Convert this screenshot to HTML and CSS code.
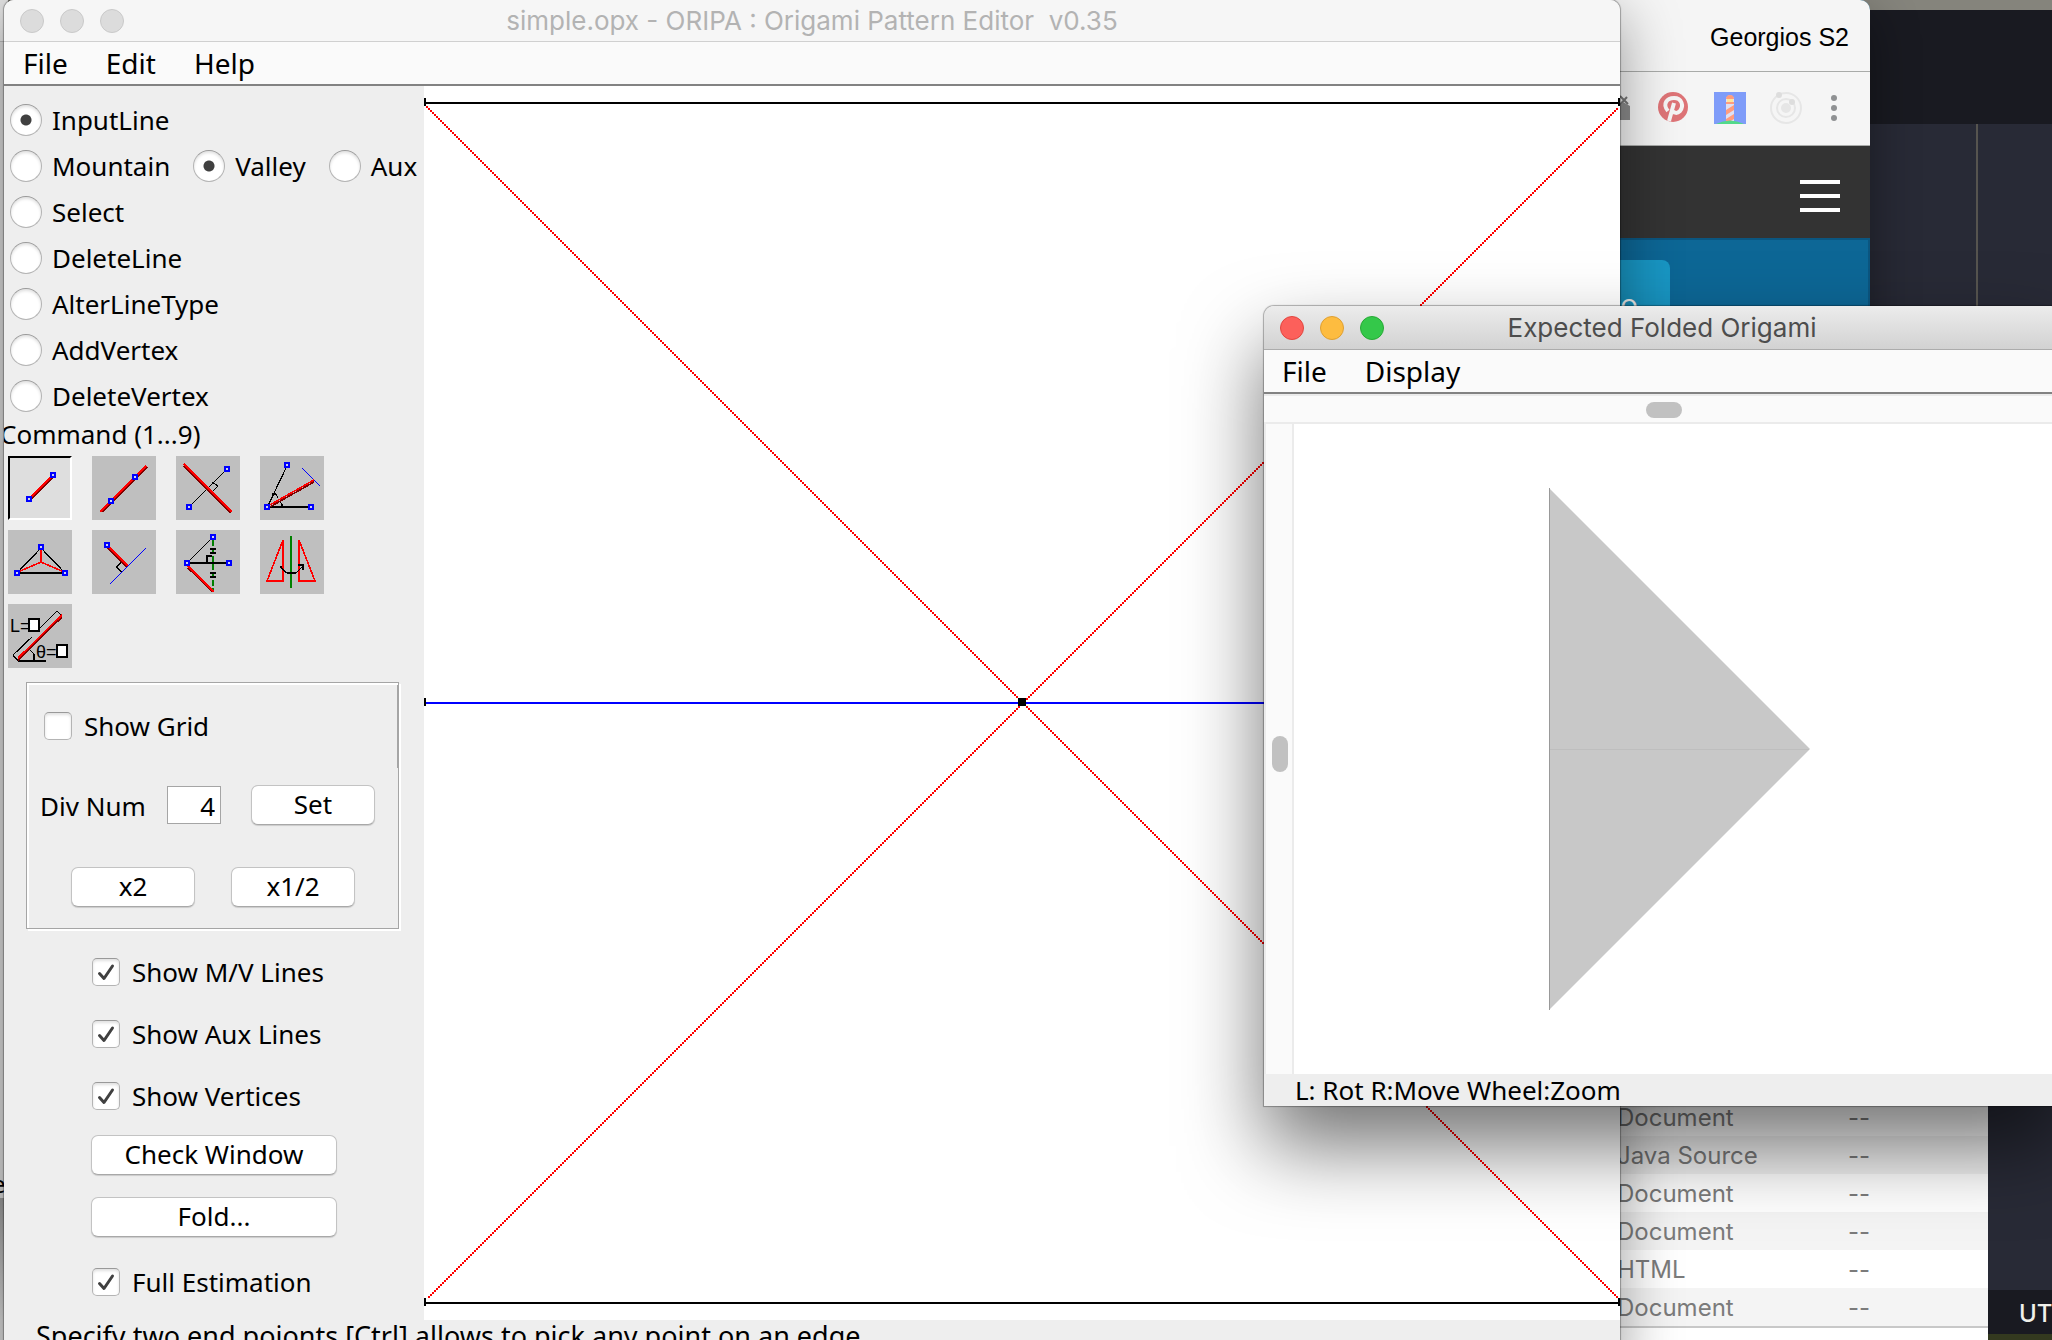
FILE: index.html
```html
<!DOCTYPE html>
<html lang="en">
<head>
<meta charset="utf-8">
<title>simple.opx - ORIPA</title>
<link rel="stylesheet" href="styles.css">
</head>
<body>
<svg class="defs" aria-hidden="true">
  <symbol id="pt" viewBox="0 0 3 3"><rect x=".5" y=".5" width="2" height="2" fill="#cfd6e8" stroke="#00f" stroke-width="1"/></symbol>
</svg>
<div class="desktop">

  <section class="window editor" aria-label="Code editor">
    <div class="editor-tabs"></div>
    <div class="editor-body"><div class="editor-ruler"></div></div>
    <footer class="editor-status">UTF-8</footer>
  </section>

  <section class="window browser" aria-label="Browser">
    <header class="browser-title">Georgios S2</header>
    <div class="browser-tools">
      <svg class="ext" width="32" height="32" viewBox="0 0 32 32"><path d="M4 14 14 6 28 14v14H4z" fill="#8c8c8c"/><path d="M12 18 24 4M8 12 20 2" stroke="#f5f5f5" stroke-width="4"/><path d="M14 17 25 5M18 4l8 8" stroke="#777" stroke-width="2"/></svg>
      <svg class="ext" width="32" height="32" viewBox="0 0 32 32"><circle cx="15" cy="15" r="15" fill="#de7477"/><path d="M10 19C4 12 9 6 16 6c8 0 10 8 6 13-3 3-6 2-7 0M16 11 11 29" fill="none" stroke="#f5f5f5" stroke-width="4"/></svg>
      <svg class="ext" width="32" height="32" viewBox="0 0 32 32"><path d="M0 0h32v32H0z" fill="#7f9cf9"/><path d="M12 30V6q4-6 8 0v24z" fill="#dfe0f2"/><path d="M12 7q0-4 4-4t4 4zM12 10h8v2h-8zM12 18l8-5v5l-8 5zM12 27l8-5v5l-5 3h-3z" fill="#ff9c7e"/><path d="M13 7h6v3h-6z" fill="#ffe59a"/><path d="M2 32q14-7 28 0z" fill="#52d98a"/></svg>
      <svg class="ext" width="32" height="32" viewBox="0 0 32 32" fill="none" stroke="#e6e6e6" stroke-width="2"><circle cx="16" cy="16" r="15"/><circle cx="16" cy="16" r="9"/><circle cx="16" cy="16" r="4" fill="#e6e6e6"/><circle cx="9" cy="3" r="2" fill="#ddd" stroke="#ddd"/><circle cx="22" cy="10" r="2" fill="#ddd" stroke="#ddd"/></svg>
      <svg class="ext dots" width="8" height="32" viewBox="0 0 8 32" fill="#8f9193"><circle cx="4" cy="6" r="3"/><circle cx="4" cy="16" r="3"/><circle cx="4" cy="26" r="3"/></svg>
    </div>
    <div class="page-head"><button class="burger" aria-label="Menu"><i></i><i></i><i></i></button></div>
    <div class="page-hero"><a class="hero-btn" href="#">Intro</a></div>
  </section>

  <section class="window finder" aria-label="Finder">
    <table class="files">
      <tbody>
        <tr><td>Document</td><td>--</td></tr>
        <tr><td>Java Source</td><td>--</td></tr>
        <tr><td>Document</td><td>--</td></tr>
        <tr><td>Document</td><td>--</td></tr>
        <tr><td>HTML</td><td>--</td></tr>
        <tr><td>Document</td><td>--</td></tr>
      </tbody>
    </table>
  </section>

  <div class="sliver"><span>e</span></div>

  <main class="window oripa">
    <header class="titlebar inactive">
      <div class="lights"><i></i><i></i><i></i></div>
      <h1 class="title">simple.opx - ORIPA : Origami Pattern Editor&nbsp; v0.35</h1>
    </header>
    <nav class="menubar"><button>File</button><button>Edit</button><button>Help</button></nav>
    <div class="work">
      <aside class="sidebar">
        <div class="modes">
          <label class="opt"><input type="radio" name="mode" checked>InputLine</label>
          <div class="line-types">
            <label class="opt"><input type="radio" name="type">Mountain</label>
            <label class="opt"><input type="radio" name="type" checked>Valley</label>
            <label class="opt"><input type="radio" name="type">Aux</label>
          </div>
          <label class="opt"><input type="radio" name="mode">Select</label>
          <label class="opt"><input type="radio" name="mode">DeleteLine</label>
          <label class="opt"><input type="radio" name="mode">AlterLineType</label>
          <label class="opt"><input type="radio" name="mode">AddVertex</label>
          <label class="opt"><input type="radio" name="mode">DeleteVertex</label>
        </div>
        <p class="command">Command (1...9)</p>
        <div class="tools">
          <button class="tool pressed" aria-label="Segment by two points"><svg viewBox="0 0 32 32"><path class="dk" d="M11.500 21.500 22.500 10.500"/><path class="rd" d="M11 21 22 10"/><use href="#pt" x="21" y="8" width="3" height="3"/><use href="#pt" x="9" y="20" width="3" height="3"/></svg></button>
          <button class="tool" aria-label="Line through two points"><svg viewBox="0 0 32 32"><path class="dk" d="M5 28 27.500 5.500"/><path class="rd" d="M4 28 27 5"/><use href="#pt" x="20" y="9" width="3" height="3"/><use href="#pt" x="8" y="21" width="3" height="3"/></svg></button>
          <button class="tool" aria-label="Perpendicular bisector"><svg viewBox="0 0 32 32"><path class="bk" d="M7 25 25 7M18 13l3 2-3 3"/><path class="dk" d="M4 5 27.500 28.500"/><path class="rd" d="M4 4 28 28"/><use href="#pt" x="24" y="5" width="3" height="3"/><use href="#pt" x="5" y="24" width="3" height="3"/></svg></button>
          <button class="tool" aria-label="Angle bisector"><svg viewBox="0 0 32 32"><path class="bk" d="M13 6 7.500 17.500 4 25M4 25.500H24M6 19h2l1 2M9 22l2 2v2"/><path class="bl" d="M21 6 30 15"/><path class="dk" d="M4 26 27 13"/><path class="rd" d="M4 25 27 12"/><use href="#pt" x="12" y="3" width="3" height="3"/><use href="#pt" x="24" y="24" width="3" height="3"/><use href="#pt" x="2" y="24" width="3" height="3"/></svg></button>
          <button class="tool" aria-label="Rabbit ear"><svg viewBox="0 0 32 32"><path class="bk" d="M5 21 16.500 9 28 21M5 21.500H28"/><path class="rd" d="M16.500 9v7L5 21M16.500 16 28 21"/><use href="#pt" x="15" y="7" width="3" height="3"/><use href="#pt" x="3" y="20" width="3" height="3"/><use href="#pt" x="27" y="20" width="3" height="3"/></svg></button>
          <button class="tool" aria-label="Perpendicular to line"><svg viewBox="0 0 32 32"><path class="bk" d="M15 16l-3 2.500 3 2.500"/><path class="dk" d="M8 9 17.500 18.500"/><path class="rd" d="M8 8 18 18"/><path class="bl" d="M9 27 27 9"/><use href="#pt" x="6" y="6" width="3" height="3"/></svg></button>
          <button class="tool" aria-label="Mirror segment"><svg viewBox="0 0 32 32"><path class="gn" d="M18.500 5V31" stroke-dasharray="3 1"/><path class="bk" d="M6 16 18 4M6 16.500H26M15.500 16v-3H18M17 9.500h3M17 11.500h3M17 21.500h3M17 23.500h3"/><path class="dk" d="M6 19 18.500 31"/><path class="rd" d="M6 18 19 31"/><use href="#pt" x="17" y="2" width="3" height="3"/><use href="#pt" x="4" y="15" width="3" height="3"/><use href="#pt" x="25" y="15" width="3" height="3"/></svg></button>
          <button class="tool" aria-label="Mirror copy"><svg viewBox="0 0 32 32"><path class="rd" d="M11.500 5v20.500h-8zM19.500 5v20.500h8z"/><path class="gn" d="M15.500 3V29"/><path class="bk" d="M10.500 18v1l3 2.500h4.500L21.500 18M19 17.500h2.500V20"/></svg></button>
          <button class="tool" aria-label="Segment by length and angle"><svg viewBox="0 0 32 32"><path class="bk" d="M12 16.500 2.500 25.500 5 28.500H19M16 12 24.500 3.500 27 6M11 23l2 2v3"/><path class="dk" d="M5 28 27 6.500"/><path class="rd" d="M5 27 27 5.500"/><path d="M10.500 7.500h5v6h-5zM24.500 20.500h5v6h-5z" fill="#fff" stroke="#000"/><text x="1" y="14" font-size="9">L=</text><text x="14" y="27" font-size="9">θ=</text></svg></button>
        </div>
        <fieldset class="grid-box">
          <label class="check"><input type="checkbox">Show Grid</label>
          <div class="div-row"><label for="div">Div Num</label><input id="div" type="text" value="4"><button class="btn">Set</button></div>
          <div class="scale-row"><button class="btn">x2</button><button class="btn">x1/2</button></div>
        </fieldset>
        <div class="shows">
          <label class="check"><input type="checkbox" checked>Show M/V Lines</label>
          <label class="check"><input type="checkbox" checked>Show Aux Lines</label>
          <label class="check"><input type="checkbox" checked>Show Vertices</label>
          <button class="btn wide">Check Window</button>
          <button class="btn wide">Fold...</button>
          <label class="check last"><input type="checkbox" checked>Full Estimation</label>
        </div>
      </aside>
      <div class="canvas">
        <svg viewBox="0 0 1196 1234" preserveAspectRatio="xMinYMin meet">
          <defs><pattern id="dots" width="4" height="4" patternUnits="userSpaceOnUse"><path d="M2 0h2v2H2zM0 2h2v2H0z" fill="#f00" shape-rendering="crispEdges"/></pattern></defs>
          <path d="M2 20 1194 1212M1194 22 4 1212" stroke="url(#dots)" stroke-width="2.800"/>
          <path d="M0 617H1196" stroke="#00f" stroke-width="2"/>
          <path d="M0 17H1196M0 1217H1196M1 12v8M1 612v8M1 1212v8M1195 12v8M1195 1212v8" stroke="#000" stroke-width="2"/>
          <path d="M594 612h8v8h-8z"/>
        </svg>
      </div>
    </div>
    <footer class="hint">Specify two end poionts [Ctrl] allows to pick any point on an edge.</footer>
  </main>

  <section class="window folded" aria-label="Expected Folded Origami">
    <header class="titlebar">
      <div class="lights"><i></i><i></i><i></i></div>
      <h2 class="title">Expected Folded Origami</h2>
    </header>
    <nav class="menubar"><button>File</button><button>Display</button></nav>
    <div class="hscroll"><i></i></div>
    <div class="view">
      <div class="vscroll"><i></i></div>
      <svg class="model" width="766" height="650" viewBox="0 0 766 650"><path d="M255 64 516 325 255 586z" fill="#c8c8c8"/><path d="M255 325.500H515" stroke="#bebebe"/><path d="M255.500 64V586" stroke="#999" stroke-width="1"/></svg>
    </div>
    <footer class="keys">L: Rot R:Move Wheel:Zoom</footer>
  </section>
</div>
</body>
</html>
```
FILE: styles.css
```css
* { box-sizing: border-box; }
body { margin: 0; font: 26px/32px "Noto Sans", sans-serif; color: #000; }
button, input { font: inherit; color: inherit; }
.defs { position: absolute; width: 0; height: 0; }
.desktop { position: relative; height: 100vh; overflow: hidden; background: linear-gradient(#85847c 20px, #33391f 60px); }
.window { position: absolute; overflow: hidden; }

/* code editor */
.editor { left: 1700px; right: -40px; top: 10px; bottom: 6px; display: flex; flex-direction: column; background: #282a36; }
.editor-tabs { height: 114px; background: #191a21; }
.editor-body { flex: 1; padding-left: 276px; }
.editor-ruler { width: 2px; height: 100%; background: #56544f; }
.editor-status { height: 44px; padding-left: 319px; background: #191a21; color: #f0f0ea; font: 500 24px/48px Inter, sans-serif; }

/* browser */
.browser { left: 900px; right: 182px; top: 0; height: 1120px; border-radius: 0 10px 0 0; background: #0d6796; box-shadow: 0 16px 48px rgba(0,0,0,.4); }
.browser-title { height: 72px; padding: 0 21px; border-bottom: 1px solid #a9aba9; background: #f5f5f5; font: 25px/74px "Liberation Sans", sans-serif; text-align: right; }
.browser-tools { display: flex; justify-content: flex-end; align-items: center; gap: 24px; height: 74px; padding: 0 32px 2px; border-bottom: 1px solid #a9aba9; background: #f5f5f5; }
.browser-tools .dots { margin-left: 4px; }
.page-head { display: flex; justify-content: flex-end; align-items: center; height: 92px; padding: 8px 30px 0; background: #333; }
.burger { display: flex; flex-direction: column; gap: 10px; width: 40px; padding: 0; border: 0; background: none; }
.burger i { height: 4px; background: #fff; }
.page-hero { display: flex; height: 800px; padding: 20px 198px 0; justify-content: flex-end; align-items: flex-start; border: solid #0b5680; border-width: 2px 2px 0 0; }
.hero-btn { padding: 24px 32px; border-radius: 8px; background: #1998c6; color: #fff; font: 30px/40px "Open Sans", sans-serif; text-decoration: none; }

/* finder */
.finder { left: 1500px; right: 64px; top: 1098px; bottom: 0; background: #fff; }
.files { width: 100%; border-collapse: collapse; border-bottom: 2px solid #c8c8c8; color: #7b7b7b; font: 24px/36px Inter, sans-serif; }
.files td { height: 38px; padding: 2px 0 0; }
.files td:first-child { width: 348px; padding-left: 117px; }
.files tr:nth-child(even) { background: #f4f4f4; }

/* edge of the window behind, at the far left */
.sliver { position: absolute; left: 0; top: 0; bottom: 0; width: 8px; padding-top: 1168px; overflow: hidden; background: linear-gradient(#e4e4e4 41px, #b8b8b8 41px, #b8b8b8 42px, #dadada 42px, #dadada 1198px, #9a9a9a 1198px, #d8d8d8 1320px); }
.sliver span { display: block; margin-left: -8px; font-size: 24px; }

/* shared window chrome */
.titlebar { display: flex; align-items: center; justify-content: center; position: relative; height: 44px; border-bottom: 1px solid #acacac; background: linear-gradient(#ececec, #d2d2d2); color: #4d4d4d; }
.titlebar.inactive { height: 42px; border-color: #d0d0d0; background: #f6f6f6; color: #b3b3b3; }
.lights { position: absolute; left: 16px; display: flex; gap: 16px; }
.lights i { width: 24px; height: 24px; border: 1px solid #e2463f; border-radius: 50%; background: #fc605b; }
.lights i:nth-child(2) { border-color: #dfa032; background: #fdbc40; }
.lights i:nth-child(3) { border-color: #27aa35; background: #34c84a; }
.inactive .lights i { border-color: #c9c9c9; background: #dcdcdc; }
.title { margin: 0; font: 26px/32px Inter, sans-serif; white-space: pre; }
.menubar { display: flex; gap: 38px; height: 44px; padding: 0 19px; border-bottom: 2px solid #828282; background: #fafafa; }
.folded .menubar { padding: 0 18px; }
.menubar button { padding: 0; border: 0; background: none; font-size: 28px; line-height: 40px; }

/* pattern editor */
.oripa { left: 4px; right: 432px; top: 0; display: flex; flex-direction: column; border-radius: 10px 10px 0 0; background: #eee; box-shadow: 0 0 1px 1px rgba(0,0,0,.3), 0 16px 60px rgba(0,0,0,.4); }
.work { display: flex; align-items: stretch; }
.sidebar { flex: none; width: 420px; padding-top: 11px; }
.modes { display: flex; flex-direction: column; }
.line-types { display: flex; gap: 23px; }
.opt, .check { display: flex; align-items: center; white-space: nowrap; }
.opt { height: 46px; padding-left: 6px; gap: 10px; }
.line-types .opt + .opt { padding: 0; }
input[type=radio], input[type=checkbox] { appearance: none; flex: none; margin: 0; border: 1px solid #b4b4b4; border-top-color: #999; background: #fff; box-shadow: inset 0 2px 3px rgba(0,0,0,.12); }
input[type=radio] { width: 32px; height: 32px; border-radius: 50%; }
input[type=radio]:checked { background: radial-gradient(circle, #404040 5px, #fff 6px); }
input[type=checkbox] { width: 28px; height: 28px; border-radius: 5px; }
input[type=checkbox]:checked { background: #fff url("data:image/svg+xml,%3Csvg xmlns='http://www.w3.org/2000/svg' viewBox='0 0 26 26'%3E%3Cpath d='M6.500 14.500 11 19.500 19.500 7' fill='none' stroke='%23404040' stroke-width='3' stroke-linecap='round' stroke-linejoin='round'/%3E%3C/svg%3E"); }
.command { margin: 0 0 7px -4px; line-height: 30px; }
.tools { display: grid; grid-template-columns: repeat(4, 64px); gap: 10px 20px; padding-left: 4px; }
.tool { width: 64px; height: 64px; padding: 0; border: 0; background: #bfbfbf; }
.tool.pressed { border: 2px solid #000; border-right-color: #fff; border-bottom-color: #fff; background: #dedede; }
.tool svg { display: block; width: 64px; height: 64px; fill: none; stroke-width: .8; shape-rendering: crispEdges; }
.tool.pressed svg { margin: -2px; }
.tool text { fill: #000; font-family: "Liberation Sans", sans-serif; }
.bk { stroke: #000; stroke-width: .6; }
.rd { stroke: #f00; }
.dk { stroke: #7f0000; }
.bl { stroke: #00f; stroke-width: .6; }
.gn { stroke: #008000; }
.grid-box { display: flex; flex-direction: column; width: 373px; height: 247px; margin: 14px 0 0 22px; padding: 29px 0 0; border: 1px solid #a5a5a5; box-shadow: 2px 2px #fff, inset 2px 2px #fff; background: linear-gradient(#a5a5a5, #a5a5a5) right top / 1px 85px no-repeat; }
.check { gap: 12px; height: 28px; }
.grid-box .check { padding-left: 17px; }
.div-row { display: flex; align-items: center; height: 40px; margin-top: 45px; padding-left: 13px; }
.div-row label { width: 127px; padding-top: 2px; }
.div-row input { width: 54px; height: 38px; margin-right: 30px; padding: 2px 5px 0; border: 1px solid #a5a5a5; background: #fff; text-align: right; }
.btn { width: 124px; height: 40px; padding: 0 0 2px; border: 1px solid #c3c3c3; border-bottom-color: #a8a8a8; border-radius: 7px; background: #fff; box-shadow: 0 1px 1px rgba(0,0,0,.15); line-height: 34px; }
.scale-row { display: flex; gap: 36px; margin-top: 42px; padding-left: 44px; }
.shows { display: flex; flex-direction: column; align-items: flex-start; gap: 34px; padding: 29px 0 24px 88px; }
.btn.wide { width: 246px; margin: -9px 0 -3px -1px; }
.canvas { flex: 1; min-width: 0; background: #fff; }
.canvas svg { display: block; width: 100%; shape-rendering: crispEdges; }
.hint { height: 48px; padding: 0 32px; font-size: 27px; white-space: nowrap; }

/* folded model */
.folded { left: 1264px; right: -8px; top: 306px; border-radius: 10px 10px 0 0; background: #eee; box-shadow: 0 0 1px 1px rgba(0,0,0,.3), 0 40px 80px rgba(0,0,0,.55); }
.hscroll { height: 30px; padding: 6px 0 0 382px; border: solid #ebebeb; border-width: 2px 0; background: #fafafa; }
.hscroll i { display: block; width: 36px; height: 16px; border-radius: 8px; background: #c1c1c1; }
.view { display: flex; background: #fff; }
.vscroll { flex: none; width: 30px; padding: 312px 0 0 6px; border: solid #ebebeb; border-width: 0 2px; background: #fafafa; }
.vscroll i { display: block; width: 16px; height: 36px; border-radius: 8px; background: #c1c1c1; }
.model { display: block; flex: none; }
.keys { height: 32px; padding: 0 31px; }
```
